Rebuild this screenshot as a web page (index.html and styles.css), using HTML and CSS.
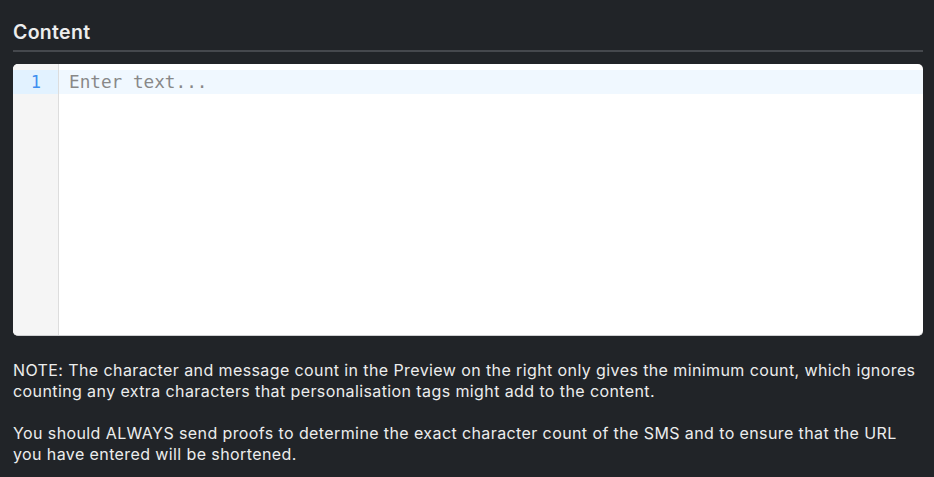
FILE: index.html
```html
<!DOCTYPE html>
<html>
<head>
<meta charset="utf-8">
<link rel="stylesheet" href="styles.css">
</head>
<body>
<div class="panel">
  <h2 class="title">Content</h2>
  <div class="editor">
    <div class="gutter">
      <div class="ln active">1</div>
    </div>
    <div class="lines">
      <div class="line active"><span class="placeholder">Enter text...</span></div>
    </div>
  </div>
  <p class="note">NOTE: The character and message count in the Preview on the right only gives the minimum count, which ignores counting any extra characters that personalisation tags might add to the content.</p>
  <p class="note">You should ALWAYS send proofs to determine the exact character count of the SMS and to ensure that the URL you have entered will be shortened.</p>
</div>
</body>
</html>
```
FILE: styles.css
```css
html, body {
  margin: 0;
  padding: 0;
  background: #212428;
}
.panel {
  padding: 20px 11px 0 13px;
  font-family: Inter, "Noto Sans", sans-serif;
  color: #eceded;
}
.title {
  margin: 0;
  font-size: 19.5px;
  font-weight: 600;
  line-height: 24px;
  padding-bottom: 6px;
  border-bottom: 2px solid #45484d;
  letter-spacing: 0.3px;
}
.editor {
  margin-top: 12px;
  height: 272px;
  background: #fff;
  border-radius: 5px;
  display: flex;
  overflow: hidden;
  border-bottom: 1px solid #cfd0d2;
  box-sizing: border-box;
}
.gutter {
  width: 45px;
  background: #f5f5f5;
  border-right: 1px solid #dddddd;
  padding-top: 6px;
}
.ln {
  height: 24px;
  line-height: 24px;
  text-align: right;
  padding-right: 17px;
  font-family: "DejaVu Sans Mono", monospace;
  font-size: 17px;
  color: #999;
}
.ln.active {
  background: #e2f2ff;
  color: #3f8ff0;
}
.lines {
  flex: 1;
  padding-top: 6px;
}
.line {
  height: 24px;
  line-height: 24px;
  padding-left: 10px;
  font-family: "DejaVu Sans Mono", monospace;
  font-size: 17.7px;
}
.line.active {
  background: #f0f8ff;
}
.placeholder {
  color: #888888;
}
.note {
  margin: 24px 0 0;
  font-size: 16px;
  line-height: 21px;
  letter-spacing: 0.4px;
}
.note + .note {
  margin-top: 21px;
}
```
